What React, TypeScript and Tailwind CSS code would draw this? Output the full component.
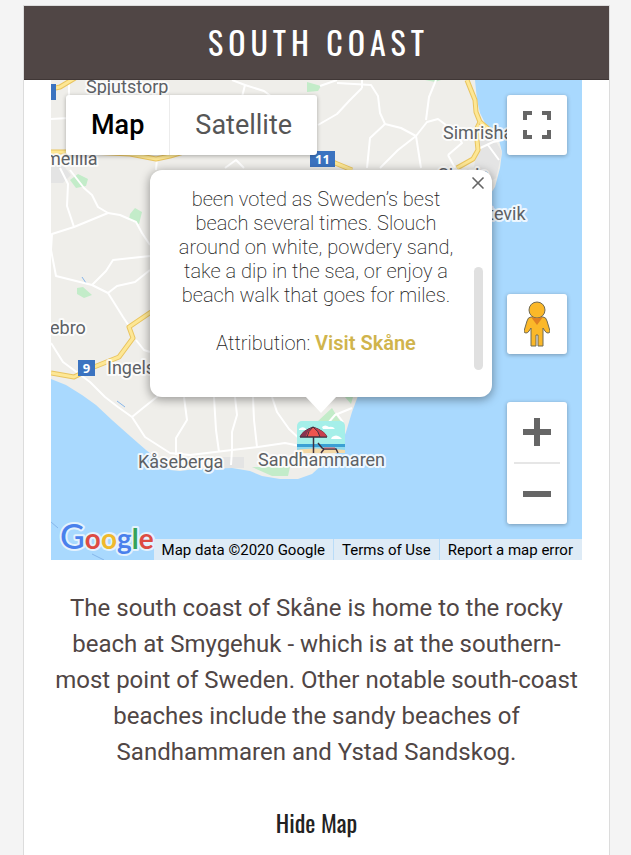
import { X } from "lucide-react";

const WHITE_ROADS = [
  "M70 170 L84 188 L92 195 L98 207 L108 213 L120 215 L136 222 L142 233 L150 245",
  "M60 168 L68 184 L67 206 L74 227",
  "M108 213 L74 227 L52 234 L51 250 L56 276 L92 285 L106 271 L113 260 L150 256",
  "M92 285 L108 293 L123 317 L129 326 M108 293 L117 286 L135 282 L150 270",
  "M51 343 L63 362 L90 382 L105 397 L118 407 L132 417 L145 437 L170 453 L190 455",
  "M132 417 L143 408 L158 396",
  "M136 340 L144 350 L150 352",
  "M176 455 L176 438 L187 420 L184 397",
  "M214 397 L216 430 L219 452 M190 455 L232 450 L258 447 L285 443 L300 446",
  "M235 397 L237 415 L232 432 L232 450 M253 397 L254 420 L257 447",
  "M272 397 L277 412 L289 429 L302 441 M232 450 L231 465",
  "M51 119 L69 118 L69 80",
  "M232 80 L245 85 L242 97 M245 85 L264 91 L272 97",
  "M225 168 L236 160 L244 168 M156 170 L157 158",
  "M318 125 L337 114 L350 100 L362 88 M320 86 L337 80 M337 83 L371 85 L378 96 L380 113 L385 124 L401 128 L416 136 L427 122 L438 119 L446 125",
  "M362 80 L362 88 M436 80 L429 97 L426 120 M416 136 L421 168",
  "M385 124 L370 138 L367 168 M416 136 L398 150 L380 168",
  "M448 155 L455 168 M448 155 L462 143 L458 136",
  "M476 150 L493 142 L503 140 M488 145 L499 160",
  "M322 430 L335 415 L352 408 M336 413 L343 422",
];

const YELLOW_ROADS = [
  "M51 89 L60 87 L75 78",
  "M51 152 L90 152 L130 154 L156 159 L170 156 L190 150",
  "M318 158 L335 163 L352 170",
  "M467 80 L475 100 L476 112 L480 122 L476 130 L478 150 L473 159 L457 168",
  "M480 122 L492 132",
  "M51 373 L74 377 L94 367 L119 357 L133 338 L129 327 L151 312",
];

const LABELS = [
  { text: "Spjutstorp", x: 86, y: 93 },
  { text: "melilla", x: 45, y: 165 },
  { text: "Simrishamn", x: 443, y: 139 },
  { text: "Simris", x: 438, y: 181 },
  { text: "tevik", x: 488, y: 220 },
  { text: "ebro", x: 50, y: 334 },
  { text: "Ingelstorp", x: 107, y: 374 },
  { text: "Kåseberga", x: 138, y: 468 },
  { text: "Sandhammaren", x: 258, y: 466 },
];

const SHIELDS = [
  { text: "9", x: 78, y: 360, w: 17 },
  { text: "11", x: 310, y: 151, w: 25 },
  { text: "", x: 39, y: 84, w: 17 },
];

const GOOGLE = [
  { ch: "o", color: "#dd4b43" },
  { ch: "o", color: "#f0b92b" },
  { ch: "g", color: "#4a80ec" },
  { ch: "l", color: "#35a35a" },
  { ch: "e", color: "#dd4b43" },
];

function BeachMarker() {
  return (
    <g>
      <rect x="297" y="421" width="48" height="32" rx="5" fill="#a5efe9" />
      <path d="M297 444h48v3h-48z" fill="#3ba0d4" />
      <path d="M297 447h48v3h-48z" fill="#8fd9ee" />
      <path d="M297 450q14-3 48 0v3h-48z" fill="#f3d9a8" />
      <path d="M322 427q3-3 7 0q4-1 6 2h-12zM332 437q4-3 8 0l2 2h-11zM299 429q3-3 6-1l2 2h-8z" fill="#fff" />
      <path d="M313.500 429v24" stroke="#3f3040" strokeWidth="1.500" />
      <path d="M300 437q2-6 13-10q12 4 14 10z" fill="#f0544f" stroke="#3f3040" strokeWidth="1" />
      <path d="M300 437q2-6 13-10q-6 4-7 10z" fill="#873350" />
      <path d="M313 427q6 4 7 10h7q-2-6-14-10z" fill="#c93f50" />
      <path d="M307 437q1-6 6-10M320 437q-1-6-7-10M300 437h27" fill="none" stroke="#3f3040" strokeWidth="1" />
      <path d="M318 443l4 5l2 1h12l2 4M324 449l-3 4" fill="none" stroke="#3f3040" strokeWidth="1.500" />
      <path d="M324 448h11" stroke="#d9545a" strokeWidth="1" />
    </g>
  );
}

function MapCanvas() {
  return (
    <svg
      viewBox="51 80 531 480"
      preserveAspectRatio="xMidYMid slice"
      className="block h-full w-full"
      role="img"
      aria-label="Map of the south coast"
    >
      <rect x="0" y="0" width="700" height="700" fill="#a9d9fe" />
      <path
        d="M51 379 L66 385 L82 395 L96 405 L112 420 L130 436 L146 450 L160 461 L170 470 L180 471 L195 469 L232 468 L250 471 L262 476 L280 479 L298 479 L312 474 L324 463 L338 452 L346 432 L352 412 L358 396 L400 300 L485 202 L495 187 L500 168 L502 152 L499 140 L487 127 L480 113 L477 100 L475 80 L0 60 L0 379 Z"
        fill="#efeeea"
      />
      <g fill="#e4e4e4">
        <path d="M51 165h12l8 10l-8 8h-12z" />
        <path d="M478 140l16-2l8 14l-6 26l-14 8l-8-18z" />
        <path d="M222 457h22v11h-22z" />
      </g>
      <g fill="#c3ecc9">
        <path d="M70 180l8-6l10 5l-2 7l-10 2z" />
        <path d="M130 214l5-6l7 4l-3 12l-10-4z" />
        <path d="M77 288l6-1l9 8l-8 3l-7-4z" />
        <path d="M307 82l14 4l-3 5l-11 1z" />
        <path d="M425 80h16l-6 2z" />
        <path d="M252 467l38 0l-2 9h-16z" />
        <path d="M318 421l14-13l6 10l7 8z" />
        <path d="M345 397h8l-2 7z" />
      </g>
      <path d="M82 277l4 6M117 401l8 6M51 522l7 6M92 554l12 6" stroke="#86b6ea" strokeWidth="1" fill="none" />
      <g fill="none" stroke="#fff" strokeWidth="2" strokeLinejoin="round">
        {WHITE_ROADS.map((d) => (
          <path key={d} d={d} />
        ))}
      </g>
      <g fill="none" strokeLinejoin="round">
        {YELLOW_ROADS.map((d) => (
          <g key={d}>
            <path d={d} stroke="#e9c45f" strokeWidth="5" />
            <path d={d} stroke="#fde795" strokeWidth="3" />
          </g>
        ))}
      </g>
      <BeachMarker />
      {SHIELDS.map((s) => (
        <g key={s.x}>
          <rect x={s.x} y={s.y} width={s.w} height="16" fill="#3b73c0" />
          <text
            x={s.x + s.w / 2}
            y={s.y + 13}
            textAnchor="middle"
            className="fill-white font-['Noto_Sans',sans-serif] text-[13px] font-bold"
          >
            {s.text}
          </text>
        </g>
      ))}
      {LABELS.map((l) => (
        <text
          key={l.text}
          x={l.x}
          y={l.y}
          stroke="#fff"
          strokeOpacity="0.8"
          strokeWidth="4"
          strokeLinejoin="round"
          paintOrder="stroke"
          className="fill-[#5d6165] text-[18px]"
        >
          {l.text}
        </text>
      ))}
      <text
        x="60"
        y="549"
        stroke="#e4f2fd"
        strokeWidth="4"
        strokeLinejoin="round"
        paintOrder="stroke"
        className="font-[Lato,sans-serif] text-[28px] font-bold"
      >
        <tspan fill="#4a80ec" className="text-[34px] font-medium">
          G
        </tspan>
        {GOOGLE.map((g, i) => (
          <tspan key={i} fill={g.color}>
            {g.ch}
          </tspan>
        ))}
      </text>
    </svg>
  );
}

function InfoWindow() {
  return (
    <div className="absolute top-[90px] left-[99px] h-[227px] w-[342px]">
      <div className="relative h-full rounded-xl bg-white pt-[17px] pr-[34px] pl-6 shadow-[0_2px_10px_1px_rgba(0,0,0,0.35)]">
        <p className="text-center text-[20px] leading-6 font-extralight text-[#222]">
          been voted as Sweden’s best
          <br />
          beach several times. Slouch
          <br />
          around on white, powdery sand,
          <br />
          take a dip in the sea, or enjoy a
          <br />
          beach walk that goes for miles.
        </p>
        <p className="mt-6 text-center text-[20px] leading-6 font-extralight text-[#222]">
          Attribution:{" "}
          <a href="#visit-skane" className="font-semibold text-[#d0b44c]">
            Visit Skåne
          </a>
        </p>
        <div className="absolute top-[97px] right-[9px] h-[103px] w-[9px] rounded-full bg-[#e0e0e0]" />
        <button type="button" aria-label="Close" className="absolute top-[3px] right-1 text-[#666]">
          <X size={20} strokeWidth={2} />
        </button>
      </div>
      <div className="absolute top-[226px] left-[155px] h-[17px] w-8 bg-white [clip-path:polygon(0_0,100%_0,50%_100%)]" />
    </div>
  );
}

function Pegman() {
  return (
    <svg width="26" height="46" viewBox="0 0 26 46" aria-hidden="true">
      <g fill="#fbb829" stroke="#6f6a55" strokeWidth="1">
        <path d="M7 16h12q3 0 4 4l3 10q0 2-2 2q-2 0-3-2l-2-3v18h-5v-11h-2v11h-5v-18l-2 3q-1 2-3 2q-2 0-2-2l3-10q1-4 4-4z" />
        <circle cx="13" cy="9" r="8" />
      </g>
      <path d="M7 16q6 2 12 0l-6 8z" fill="#e08022" />
    </svg>
  );
}

const CONTROL = "rounded-[3px] bg-white shadow-[0_1px_4px_rgba(0,0,0,0.3)]";

function MapPanel() {
  return (
    <div className="relative h-[480px] overflow-hidden">
      <MapCanvas />
      <div className={`absolute top-[15px] left-[15px] flex h-[60px] text-[27px] ${CONTROL}`}>
        <button type="button" className="px-[25px] font-medium text-black">
          Map
        </button>
        <button
          type="button"
          className="border-l border-[#ececec] px-[25px] text-[#565656]"
        >
          Satellite
        </button>
      </div>
      <button
        type="button"
        aria-label="Toggle fullscreen"
        className={`absolute top-[15px] right-[15px] flex size-[60px] items-center justify-center ${CONTROL}`}
      >
        <svg width="28" height="28" viewBox="0 0 28 28" fill="none" stroke="#666" strokeWidth="4">
          <path d="M2 9V2h7M19 2h7v7M26 19v7h-7M9 26H2v-7" />
        </svg>
      </button>
      <button
        type="button"
        aria-label="Street View"
        className={`absolute top-[214px] right-[15px] flex size-[60px] items-center justify-center ${CONTROL}`}
      >
        <Pegman />
      </button>
      <div className={`absolute top-[322px] right-[15px] flex w-[60px] flex-col px-[7px] ${CONTROL}`}>
        <button type="button" aria-label="Zoom in" className="flex h-[60px] items-center justify-center">
          <svg width="28" height="28" viewBox="0 0 28 28" fill="#666">
            <path d="M11 0h6v11h11v6H17v11h-6V17H0v-6h11z" />
          </svg>
        </button>
        <div className="h-[2px] bg-[#e6e6e6]" />
        <button type="button" aria-label="Zoom out" className="flex h-[60px] items-center justify-center">
          <svg width="28" height="6" viewBox="0 0 28 6" fill="#666">
            <path d="M0 0h28v6H0z" />
          </svg>
        </button>
      </div>
      <InfoWindow />
      <div className="absolute right-0 bottom-0 flex h-[21px] divide-x divide-[#b9dcf8] bg-[#deebf6] text-[15px] leading-[22px] text-black">
        <span className="px-2">Map data ©2020 Google</span>
        <a href="#terms" className="px-2">
          Terms of Use
        </a>
        <a href="#report" className="pr-[9px] pl-2">
          Report a map error
        </a>
      </div>
    </div>
  );
}

export default function App() {
  return (
    <div className="min-h-screen bg-[#f4f4f4] pt-[5px] pr-[21px] pl-[23px] font-[Roboto,sans-serif]">
      <main className="min-h-[850px] border border-b-0 border-[#dcdcdc] bg-white">
        <h1 className="flex h-[74px] items-center justify-center border-b border-[#403736] bg-[#504645] pb-[2px] pl-1 font-[Oswald,'Roboto_Condensed',sans-serif] text-[32px] tracking-[5px] text-white uppercase">
          South Coast
        </h1>
        <div className="px-[27px]">
          <MapPanel />
          <p className="mt-[30px] text-center text-[24px] leading-9 text-[#504645]">
            The south coast of Skåne is home to the rocky beach at Smygehuk - which is at the
            southern-most point of Sweden. Other notable south-coast beaches include the sandy
            beaches of Sandhammaren and Ystad Sandskog.
          </p>
          <div className="mt-[34px] flex justify-center">
            <button
              type="button"
              className="font-[Oswald,'Roboto_Condensed',sans-serif] text-[24px] leading-9 text-[#222]"
            >
              Hide Map
            </button>
          </div>
        </div>
      </main>
    </div>
  );
}
